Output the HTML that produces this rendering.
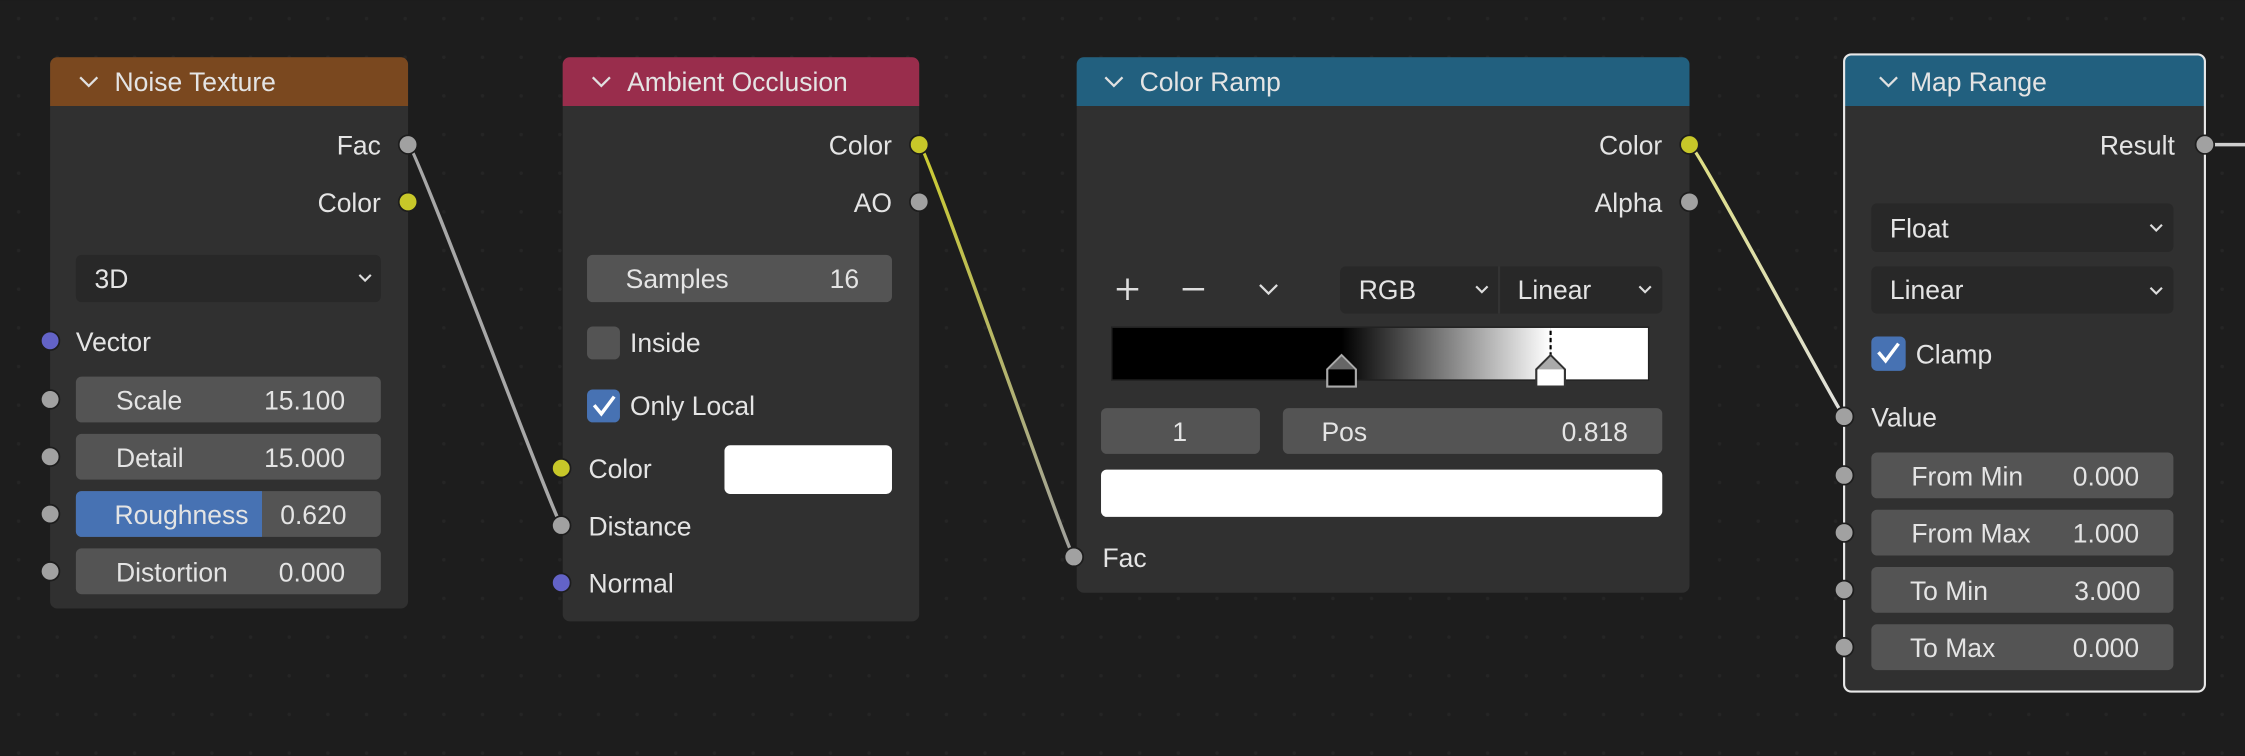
<!DOCTYPE html>
<html><head><meta charset="utf-8"><style>
html,body{margin:0;padding:0;background:#1d1d1d;overflow:hidden}
svg{display:block}
text{font-family:"Liberation Sans","DejaVu Sans",sans-serif;font-size:18.5px;fill:#e4e4e4}
</style></head><body>
<svg width="2245" height="756" viewBox="0 0 1568 528" xmlns="http://www.w3.org/2000/svg">
<defs>
<pattern id="dots" width="27" height="27" patternUnits="userSpaceOnUse"><circle cx="13" cy="13" r="1.2" fill="#252525"/></pattern>
<linearGradient id="ramp" x1="937" x2="1083" y1="0" y2="0" gradientUnits="userSpaceOnUse"><stop offset="0" stop-color="#000"/><stop offset="1" stop-color="#fff"/></linearGradient>
<linearGradient id="w2" x1="642" y1="101" x2="750" y2="389" gradientUnits="userSpaceOnUse"><stop offset="0" stop-color="#cccc30"/><stop offset="1" stop-color="#a0a0a0"/></linearGradient>
<linearGradient id="w3" x1="1180" y1="101" x2="1288" y2="291" gradientUnits="userSpaceOnUse"><stop offset="0" stop-color="#dede80"/><stop offset="1" stop-color="#e0e0e0"/></linearGradient>
</defs>
<rect width="1568" height="528" fill="#1d1d1d"/>
<rect width="1568" height="528" fill="url(#dots)"/>

<!-- wires -->
<path d="M285 101 C290 101 387 362 392 367" stroke="#a8a8a8" stroke-width="2.4" fill="none"/>
<path d="M642 101 C647 101 745 384 750 389" stroke="url(#w2)" stroke-width="2.4" fill="none"/>
<path d="M1180 101 C1185 101 1283 286 1288 291" stroke="url(#w3)" stroke-width="2.4" fill="none"/>
<path d="M1540 101 L1568 101" stroke="#cfcfcf" stroke-width="2.4"/>

<!-- Noise Texture -->
<rect x="35" y="40" width="250" height="385" rx="5" fill="#303030"/>
<path d="M40 40 H280 A5 5 0 0 1 285 45 V74 H35 V45 A5 5 0 0 1 40 40Z" fill="#7a481f"/>
<path d="M56 54 L62 60 L68 54" stroke="#e0e0e0" stroke-width="1.6" fill="none"/>
<text x="80" y="63.5">Noise Texture</text>
<text x="266" y="108" text-anchor="end">Fac</text>
<text x="266" y="148" text-anchor="end">Color</text>
<rect x="53" y="178" width="213" height="33" rx="4" fill="#282828"/>
<text x="66" y="201">3D</text>
<path d="M251 192 L255 196 L259 192" stroke="#ddd" stroke-width="1.5" fill="none"/>
<text x="53" y="245">Vector</text>
<rect x="53" y="263" width="213" height="32" rx="4" fill="#545454"/>
<text x="81" y="286">Scale</text><text x="241" y="286" text-anchor="end">15.100</text>
<rect x="53" y="303" width="213" height="32" rx="4" fill="#545454"/>
<text x="81" y="326">Detail</text><text x="241" y="326" text-anchor="end">15.000</text>
<rect x="53" y="343" width="213" height="32" rx="4" fill="#545454"/>
<path d="M57 343 H183 V375 H57 A4 4 0 0 1 53 371 V347 A4 4 0 0 1 57 343Z" fill="#4772b3"/>
<text x="80" y="366">Roughness</text><text x="242" y="366" text-anchor="end">0.620</text>
<rect x="53" y="383" width="213" height="32" rx="4" fill="#545454"/>
<text x="81" y="406">Distortion</text><text x="241" y="406" text-anchor="end">0.000</text>
<g stroke="#1d1d1d" stroke-width="1.2">
<circle cx="285" cy="101" r="6.5" fill="#a1a1a1"/>
<circle cx="285" cy="141" r="6.5" fill="#c7c729"/>
<circle cx="35" cy="238" r="6.5" fill="#6363c7"/>
<circle cx="35" cy="279" r="6.5" fill="#a1a1a1"/>
<circle cx="35" cy="319" r="6.5" fill="#a1a1a1"/>
<circle cx="35" cy="359" r="6.5" fill="#a1a1a1"/>
<circle cx="35" cy="399" r="6.5" fill="#a1a1a1"/>
</g>

<!-- Ambient Occlusion -->
<rect x="393" y="40" width="249" height="394" rx="5" fill="#303030"/>
<path d="M398 40 H637 A5 5 0 0 1 642 45 V74 H393 V45 A5 5 0 0 1 398 40Z" fill="#992d4c"/>
<path d="M414 54 L420 60 L426 54" stroke="#e0e0e0" stroke-width="1.6" fill="none"/>
<text x="438" y="63.5">Ambient Occlusion</text>
<text x="623" y="108" text-anchor="end">Color</text>
<text x="623" y="148" text-anchor="end">AO</text>
<rect x="410" y="178" width="213" height="33" rx="4" fill="#545454"/>
<text x="437" y="201">Samples</text><text x="600" y="201" text-anchor="end">16</text>
<rect x="410" y="228" width="23" height="23" rx="4" fill="#545454"/>
<text x="440" y="246">Inside</text>
<rect x="410" y="272" width="23" height="23" rx="4" fill="#4772b3"/>
<path d="M415 283 L420 289 L429 277" stroke="#fff" stroke-width="2.4" fill="none"/>
<text x="440" y="290">Only Local</text>
<text x="411" y="334">Color</text>
<rect x="506" y="311" width="117" height="34" rx="4" fill="#ffffff"/>
<text x="411" y="374">Distance</text>
<text x="411" y="414">Normal</text>
<g stroke="#1d1d1d" stroke-width="1.2">
<circle cx="642" cy="101" r="6.5" fill="#c7c729"/>
<circle cx="642" cy="141" r="6.5" fill="#a1a1a1"/>
<circle cx="392" cy="327" r="6.5" fill="#c7c729"/>
<circle cx="392" cy="367" r="6.5" fill="#a1a1a1"/>
<circle cx="392" cy="407" r="6.5" fill="#6363c7"/>
</g>

<!-- Color Ramp -->
<rect x="752" y="40" width="428" height="374" rx="5" fill="#303030"/>
<path d="M757 40 H1175 A5 5 0 0 1 1180 45 V74 H752 V45 A5 5 0 0 1 757 40Z" fill="#22607f"/>
<path d="M772 54 L778 60 L784 54" stroke="#e0e0e0" stroke-width="1.6" fill="none"/>
<text x="796" y="63.5">Color Ramp</text>
<text x="1161" y="108" text-anchor="end">Color</text>
<text x="1161" y="148" text-anchor="end">Alpha</text>
<path d="M780 202 H795 M787.5 194.5 V209.5" stroke="#ddd" stroke-width="1.8"/>
<path d="M826 202 H841" stroke="#ddd" stroke-width="1.8"/>
<path d="M880 199 L886 205 L892 199" stroke="#ddd" stroke-width="1.6" fill="none"/>
<rect x="936" y="186" width="225" height="33" rx="4" fill="#282828"/>
<path d="M1047 186 V219" stroke="#333" stroke-width="1.5"/>
<text x="949" y="209">RGB</text>
<path d="M1031 200 L1035 204 L1039 200" stroke="#ddd" stroke-width="1.5" fill="none"/>
<text x="1060" y="209">Linear</text>
<path d="M1145 200 L1149 204 L1153 200" stroke="#ddd" stroke-width="1.5" fill="none"/>
<rect x="777" y="229" width="374" height="36" fill="#000"/>
<rect x="937" y="229" width="146" height="36" fill="url(#ramp)"/>
<rect x="1083" y="229" width="68" height="36" fill="#fff"/>
<rect x="776.5" y="228.5" width="375" height="37" fill="none" stroke="#222" stroke-width="1"/>
<path d="M1083 231 V250" stroke="#000" stroke-width="1.5" stroke-dasharray="3 2"/>
<path d="M927 258 L937 248 L947 258 V270 H927Z" fill="#000" stroke="#aaa" stroke-width="1.5"/>
<path d="M928 258 L937 249 L946 258Z" fill="#666"/>
<path d="M1073 258 L1083 248 L1093 258 V270 H1073Z" fill="#fff" stroke="#333" stroke-width="1.5"/>
<path d="M1074 258 L1083 249 L1092 258Z" fill="#aaa"/>
<rect x="769" y="285" width="111" height="32" rx="4" fill="#545454"/>
<text x="824" y="308" text-anchor="middle">1</text>
<rect x="896" y="285" width="265" height="32" rx="4" fill="#545454"/>
<text x="923" y="308">Pos</text><text x="1137" y="308" text-anchor="end">0.818</text>
<rect x="769" y="328" width="392" height="33" rx="4" fill="#ffffff"/>
<text x="770" y="396">Fac</text>
<g stroke="#1d1d1d" stroke-width="1.2">
<circle cx="1180" cy="101" r="6.5" fill="#c7c729"/>
<circle cx="1180" cy="141" r="6.5" fill="#a1a1a1"/>
<circle cx="750" cy="389" r="6.5" fill="#a1a1a1"/>
</g>

<!-- Map Range -->
<rect x="1288" y="38" width="252" height="445" rx="5" fill="#303030"/>
<path d="M1293 38 H1535 A5 5 0 0 1 1540 43 V74 H1288 V43 A5 5 0 0 1 1293 38Z" fill="#22607f"/>
<rect x="1288" y="38" width="252" height="445" rx="5" fill="none" stroke="#e8e8e8" stroke-width="1.5"/>
<path d="M1313 54 L1319 60 L1325 54" stroke="#e0e0e0" stroke-width="1.6" fill="none"/>
<text x="1334" y="63.5">Map Range</text>
<text x="1519" y="108" text-anchor="end">Result</text>
<rect x="1307" y="142" width="211" height="34" rx="4" fill="#282828"/>
<text x="1320" y="166">Float</text>
<path d="M1502 157 L1506 161 L1510 157" stroke="#ddd" stroke-width="1.5" fill="none"/>
<rect x="1307" y="186" width="211" height="33" rx="4" fill="#282828"/>
<text x="1320" y="209">Linear</text>
<path d="M1502 201 L1506 205 L1510 201" stroke="#ddd" stroke-width="1.5" fill="none"/>
<rect x="1307" y="235" width="24" height="24" rx="4" fill="#4772b3"/>
<path d="M1312 246 L1317 252 L1326 240" stroke="#fff" stroke-width="2.4" fill="none"/>
<text x="1338" y="254">Clamp</text>
<text x="1307" y="298">Value</text>
<rect x="1307" y="316" width="211" height="32" rx="4" fill="#545454"/>
<text x="1335" y="339">From Min</text><text x="1494" y="339" text-anchor="end">0.000</text>
<rect x="1307" y="356" width="211" height="32" rx="4" fill="#545454"/>
<text x="1335" y="379">From Max</text><text x="1494" y="379" text-anchor="end">1.000</text>
<rect x="1307" y="396" width="211" height="32" rx="4" fill="#545454"/>
<text x="1334" y="419">To Min</text><text x="1495" y="419" text-anchor="end">3.000</text>
<rect x="1307" y="436" width="211" height="32" rx="4" fill="#545454"/>
<text x="1334" y="459">To Max</text><text x="1494" y="459" text-anchor="end">0.000</text>
<g stroke="#1d1d1d" stroke-width="1.2">
<circle cx="1540" cy="101" r="6.5" fill="#a1a1a1"/>
<circle cx="1288" cy="291" r="6.5" fill="#a1a1a1"/>
<circle cx="1288" cy="332" r="6.5" fill="#a1a1a1"/>
<circle cx="1288" cy="372" r="6.5" fill="#a1a1a1"/>
<circle cx="1288" cy="412" r="6.5" fill="#a1a1a1"/>
<circle cx="1288" cy="452" r="6.5" fill="#a1a1a1"/>
</g>
</svg>
</body></html>
